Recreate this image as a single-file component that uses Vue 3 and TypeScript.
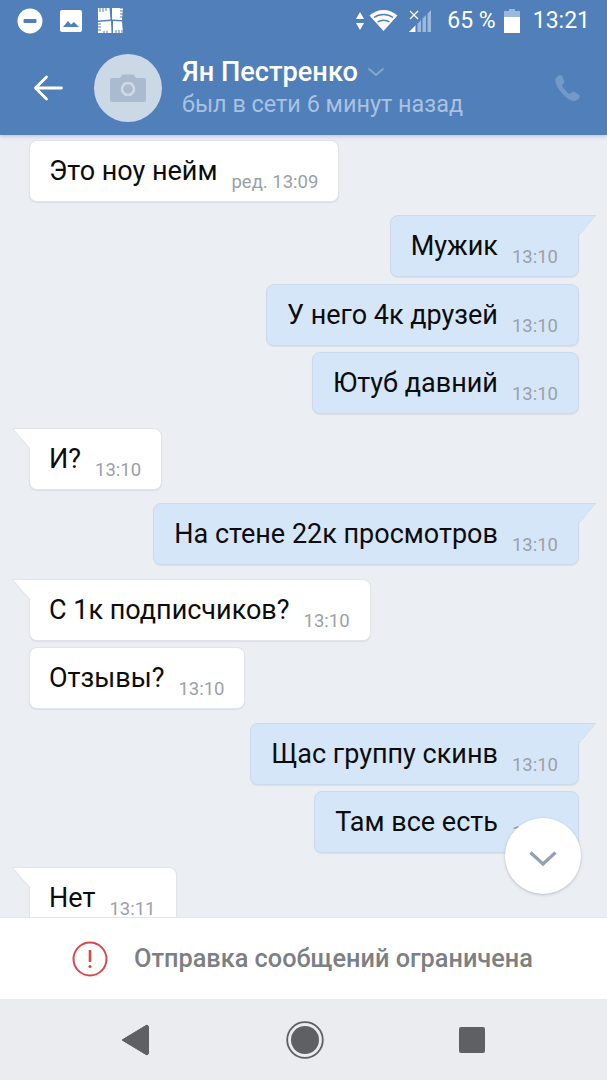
<script setup lang="ts">
interface Message {
  text: string
  time: string
  out: boolean
  tail: boolean
  far: boolean
}

const messages: Message[] = [
  { text: 'Это ноу нейм', time: 'ред. 13:09', out: false, tail: false, far: false },
  { text: 'Мужик', time: '13:10', out: true, tail: true, far: true },
  { text: 'У него 4к друзей', time: '13:10', out: true, tail: false, far: false },
  { text: 'Ютуб давний', time: '13:10', out: true, tail: false, far: false },
  { text: 'И?', time: '13:10', out: false, tail: true, far: true },
  { text: 'На стене 22к просмотров', time: '13:10', out: true, tail: true, far: true },
  { text: 'С 1к подписчиков?', time: '13:10', out: false, tail: true, far: true },
  { text: 'Отзывы?', time: '13:10', out: false, tail: false, far: false },
  { text: 'Щас группу скинв', time: '13:10', out: true, tail: true, far: true },
  { text: 'Там все есть', time: '13:10', out: true, tail: false, far: false },
  { text: 'Нет', time: '13:11', out: false, tail: true, far: true },
]
</script>

<template>
  <div class="phone">
    <header class="top">
      <div class="status">
        <div class="status-left">
          <svg width="26" height="26" viewBox="0 0 26 26"><circle cx="13" cy="13" r="12.5" fill="#fff" /><rect x="6.5" y="11" width="13" height="4" rx="1" fill="#507fb9" /></svg>
          <svg width="24" height="24" viewBox="0 0 24 24"><rect x="1" y="1" width="22" height="22" rx="2" fill="#fff" /><path d="M4 18l5-6 3 3.5 3-2.5 5 5z" fill="#507fb9" /></svg>
          <svg class="patch" width="27" height="27" viewBox="0 0 27 27">
            <path d="M1 1h11.500l1 11.500L1 13.500zM15 1h11v1l-1 11-10-.5zM1 15l13-1 .5 12H1zM16 14l9 .5 1 11.500H16z" fill="#fff" />
            <path d="M3 1v4M6 1v4M9 1v3M1 17h3M1 20h3M1 23h3M23 1h3M23 4h3M23 7h3M23 10h3M19 26v-3M22 26v-3M25 26v-3M7 26v-2M10 26v-2" stroke="#507fb9" stroke-width="1" />
          </svg>
        </div>
        <div class="status-right">
          <svg width="10" height="20" viewBox="0 0 10 20"><path d="M5 1l4 7H1zM5 19l4-7H1z" fill="#fff" /></svg>
          <svg class="wifi" width="29" height="23" viewBox="0 0 29 23"><path d="M14.5 22L0.5 6.5C4.5 3 9.5 1 14.5 1s10 2 14 5.5z" fill="#fff" /><path d="M5 8.5c5.5-4 13.500-4 19 0M8.500 13c3.500-2.500 8.500-2.500 12 0" stroke="#507fb9" stroke-width="1.500" fill="none" /></svg>
          <svg class="signal" width="24" height="24" viewBox="0 0 24 24">
            <path d="M1 23l7-7v7zM9.500 23V14.500l3.500-3.500v12zM14.500 23V9.500l3.500-3.500v17zM19.500 23V4.500L23 1v22z" fill="#9db8da" />
            <path d="M1 23l6-6v6z" fill="#fff" />
            <path d="M2 2l8 8M10 2l-8 8" stroke="#fff" stroke-width="1.300" />
          </svg>
          <span class="percent">65 %</span>
          <svg class="battery" width="16" height="24" viewBox="0 0 16 24"><path d="M5 0h6v2h5v22H0V2h5z" fill="#9db8da" /><rect y="8" width="16" height="16" fill="#fff" /></svg>
          <span class="clock">13:21</span>
        </div>
      </div>
      <div class="bar">
        <svg class="back" width="30" height="26" viewBox="0 0 30 26"><path d="M28.500 13H3M13.500 2L2.500 13l11 11" stroke="#fff" stroke-width="2.800" fill="none" stroke-linecap="round" stroke-linejoin="round" /></svg>
        <div class="avatar">
          <svg width="36" height="28" viewBox="0 0 36 28">
            <path d="M2 4h8l2.500-3.500h11L26 4h8a2 2 0 0 1 2 2v20a2 2 0 0 1-2 2H2a2 2 0 0 1-2-2V6a2 2 0 0 1 2-2z" fill="#aabbcf" />
            <circle cx="18" cy="15" r="6" fill="none" stroke="#cfdae6" stroke-width="2.500" />
          </svg>
        </div>
        <div class="who">
          <div class="name-row">
            <span class="name">Ян Пестренко</span>
            <svg width="18" height="10" viewBox="0 0 18 10"><path d="M1.500 1.500L9 8l7.500-6.500" stroke="#86a5cc" stroke-width="2" fill="none" /></svg>
          </div>
          <div class="seen">был в сети 6 минут назад</div>
        </div>
        <svg class="call" width="30" height="30" viewBox="0 0 24 24"><path d="M6.600 1.500c-1 0-3 1.300-3.700 2.800-.8 1.800.2 5.700 3.700 10.200 3.400 4.400 7.500 7.500 10.800 7.800 2 .2 4.300-1.600 4.800-3 .3-1-.3-1.700-1.200-2.300l-3-1.800c-1-.6-1.800-.4-2.500.3l-1.200 1.200c-1.600-.5-5.500-4.800-6.300-7l1.200-1.200c.7-.7.800-1.500.4-2.400L8.500 2.800c-.4-.8-1-1.300-1.900-1.300z" fill="#7399c8" /></svg>
      </div>
    </header>

    <main class="chat">
      <div
        v-for="(m, i) in messages"
        :key="i"
        class="bubble"
        :class="{ out: m.out, far: m.far }"
      >
        <svg v-if="m.tail && m.out" class="tail tail-out" width="20" height="26" viewBox="0 0 20 26">
          <path d="M0 .5H18L1 20V26H0z" fill="#d6e6f9" />
          <path d="M0 .5H18.500L1.500 20.500" fill="none" stroke="#cbdaec" />
        </svg>
        <svg v-if="m.tail && !m.out" class="tail tail-in" width="20" height="26" viewBox="0 0 20 26">
          <path d="M20 .5H1.500L19 20V26h1z" fill="#fff" />
          <path d="M20 .5H1.500L18.500 20.500" fill="none" stroke="#e0e4ea" />
        </svg>
        <span class="text">{{ m.text }}</span>
        <span class="time">{{ m.time }}</span>
      </div>
      <button class="down" type="button" aria-label="Вниз">
        <svg width="30" height="18" viewBox="0 0 30 18"><path d="M2.500 2.500L15 14 27.500 2.500" stroke="#95a1b0" stroke-width="3.200" fill="none" /></svg>
      </button>
    </main>

    <div class="notice">
      <svg width="36" height="36" viewBox="0 0 36 36">
        <circle cx="18" cy="18" r="16.500" fill="none" stroke="#d9494c" stroke-width="2" />
        <path d="M18 9v12" stroke="#d9494c" stroke-width="2.600" />
        <circle cx="18" cy="25.500" r="1.600" fill="#d9494c" />
      </svg>
      <span>Отправка сообщений ограничена</span>
    </div>

    <nav class="nav">
      <svg width="30" height="34" viewBox="0 0 30 34"><path d="M2 17L26 2.500c1.200-.7 2.500 0 2.500 1.500v26c0 1.500-1.300 2.200-2.500 1.500z" fill="#5e6063" stroke="#5e6063" stroke-linejoin="round" /></svg>
      <svg width="38" height="38" viewBox="0 0 38 38"><circle cx="19" cy="19" r="17.800" fill="none" stroke="#5e6063" stroke-width="1.800" /><circle cx="19" cy="19" r="14" fill="#5e6063" /></svg>
      <svg width="26" height="26" viewBox="0 0 26 26"><rect width="26" height="26" rx="2" fill="#5e6063" /></svg>
    </nav>
  </div>
</template>

<style>
html,
body {
  margin: 0;
  padding: 0;
  background: #ebeff4;
}
</style>

<style scoped>
.phone {
  width: 607px;
  height: 1080px;
  display: flex;
  flex-direction: column;
  overflow: hidden;
  font-family: Roboto, "Noto Sans", sans-serif;
  background: #ebeff4;
}

.top {
  height: 135px;
  flex: none;
  background: #507fb9;
  box-shadow: 0 1px 4px rgba(60, 70, 90, 0.3);
  position: relative;
  z-index: 2;
}

.status {
  height: 41px;
  display: flex;
  align-items: center;
  justify-content: space-between;
  padding: 0 17px 0 17px;
  color: #fff;
}

.status-left {
  display: flex;
  align-items: center;
  gap: 16px;
}

.patch {
  margin-left: -2px;
}

.status-right {
  display: flex;
  align-items: center;
}

.wifi {
  margin-left: 4px;
}

.signal {
  margin-left: 10px;
}

.percent {
  margin-left: 15px;
  font-size: 23px;
}

.battery {
  margin-left: 8px;
}

.clock {
  margin-left: 13px;
  font-size: 23px;
}

.bar {
  height: 94px;
  display: flex;
  align-items: center;
  padding: 0 25px 0 33px;
}

.back {
  flex: none;
}

.avatar {
  width: 68px;
  height: 68px;
  margin-left: 31px;
  border-radius: 50%;
  background: #cbd8e6;
  display: flex;
  align-items: center;
  justify-content: center;
  flex: none;
}

.who {
  margin-left: 20px;
  flex: 1;
}

.name-row {
  display: flex;
  align-items: center;
  gap: 9px;
  height: 32px;
}

.name {
  font-size: 27.200px;
  font-weight: 500;
  color: #fff;
}

.seen {
  font-size: 23.400px;
  line-height: 32px;
  color: #a9c2e0;
}

.chat {
  flex: 1;
  min-height: 0;
  position: relative;
  display: flex;
  flex-direction: column;
  align-items: flex-start;
  padding-top: 4.500px;
  overflow: hidden;
}

.bubble {
  position: relative;
  flex: none;
  box-sizing: border-box;
  height: 62px;
  margin: 6.500px 0 0 29px;
  padding: 0 20px 0 19px;
  display: flex;
  align-items: center;
  gap: 14px;
  background: #fff;
  border: 1px solid #e0e4ea;
  border-radius: 8px;
  box-shadow: 0 1px 1px rgba(90, 110, 140, 0.12);
}

.bubble:first-child {
  margin-top: 0;
}

.bubble.far {
  margin-top: 13.500px;
}

.bubble.out {
  align-self: flex-end;
  margin-left: 0;
  margin-right: 28px;
  padding-left: 20px;
  background: #d6e6f9;
  border-color: #cbdaec;
}

.bubble:has(.tail-in) {
  border-top-left-radius: 0;
}

.bubble:has(.tail-out) {
  border-top-right-radius: 0;
}

.tail {
  position: absolute;
  top: -1px;
}

.tail-out {
  right: -19px;
}

.tail-in {
  left: -19px;
}

.text {
  font-size: 27px;
  line-height: 34px;
  color: #0c0c0c;
  white-space: nowrap;
}

.time {
  font-size: 18.500px;
  line-height: 22px;
  color: #9aa1a8;
  white-space: nowrap;
  align-self: flex-end;
  margin-bottom: 8px;
}

.down {
  position: absolute;
  top: 683px;
  left: 505px;
  box-sizing: border-box;
  width: 76px;
  height: 76px;
  padding: 6px 0 0;
  border: none;
  border-radius: 50%;
  background: #fff;
  box-shadow: 0 1px 3px rgba(50, 60, 80, 0.28);
  display: flex;
  align-items: center;
  justify-content: center;
}

.notice {
  height: 82px;
  flex: none;
  box-sizing: border-box;
  background: #fff;
  border-top: 1px solid #e3e6ea;
  padding-left: 72px;
  display: flex;
  align-items: center;
  gap: 26px;
  font-size: 25.300px;
  font-weight: 500;
  color: #7c7f83;
  position: relative;
}

.nav {
  height: 81px;
  flex: none;
  background: #ebecf0;
  display: flex;
  align-items: center;
  position: relative;
  padding-left: 120px;
  gap: 135.500px;
}
</style>
